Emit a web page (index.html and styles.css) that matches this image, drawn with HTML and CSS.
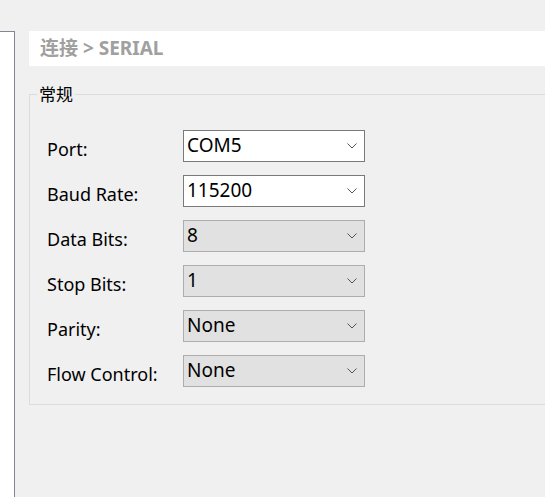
FILE: index.html
```html
<!DOCTYPE html>
<html lang="zh-CN">
<head>
<meta charset="utf-8">
<title>Serial</title>
<link rel="stylesheet" href="styles.css">
</head>
<body>
<div class="app">
  <aside class="sidebar"></aside>
  <main class="main">
    <div class="crumb">连接 &gt; SERIAL</div>
    <section class="group">
      <div class="group-title">常规</div>
      <div class="form">
        <div class="label">Port:</div>
        <div class="combo"><span class="value">COM5</span><svg class="chev" width="10" height="6" viewBox="0 0 10 6"><polyline points="0.5,0.5 5,5 9.5,0.5" fill="none" stroke="#555" stroke-width="1"/></svg></div>
        <div class="label">Baud Rate:</div>
        <div class="combo"><span class="value">115200</span><svg class="chev" width="10" height="6" viewBox="0 0 10 6"><polyline points="0.5,0.5 5,5 9.5,0.5" fill="none" stroke="#555" stroke-width="1"/></svg></div>
        <div class="label">Data Bits:</div>
        <div class="combo disabled"><span class="value">8</span><svg class="chev" width="10" height="6" viewBox="0 0 10 6"><polyline points="0.5,0.5 5,5 9.5,0.5" fill="none" stroke="#555" stroke-width="1"/></svg></div>
        <div class="label">Stop Bits:</div>
        <div class="combo disabled"><span class="value">1</span><svg class="chev" width="10" height="6" viewBox="0 0 10 6"><polyline points="0.5,0.5 5,5 9.5,0.5" fill="none" stroke="#555" stroke-width="1"/></svg></div>
        <div class="label">Parity:</div>
        <div class="combo disabled"><span class="value">None</span><svg class="chev" width="10" height="6" viewBox="0 0 10 6"><polyline points="0.5,0.5 5,5 9.5,0.5" fill="none" stroke="#555" stroke-width="1"/></svg></div>
        <div class="label">Flow Control:</div>
        <div class="combo disabled"><span class="value">None</span><svg class="chev" width="10" height="6" viewBox="0 0 10 6"><polyline points="0.5,0.5 5,5 9.5,0.5" fill="none" stroke="#555" stroke-width="1"/></svg></div>
      </div>
    </section>
  </main>
</div>
</body>
</html>
```

FILE: styles.css
```css
html, body {
  margin: 0;
  padding: 0;
  background: #f0f0f0;
  font-family: "Noto Sans", "Noto Sans CJK SC", sans-serif;
  color: #000;
  overflow: hidden;
}

.app {
  display: flex;
  padding-top: 31px;
  height: 497px;
  box-sizing: border-box;
}

.sidebar {
  width: 14px;
  flex: none;
  background: #fff;
  border-top: 1px solid #828790;
  border-right: 1px solid #828790;
}

.main {
  flex: 1;
  margin-left: 14px;
  min-width: 0;
}

.crumb {
  height: 35px;
  line-height: 35px;
  background: #fff;
  padding-left: 11px;
  font-size: 19px;
  font-weight: bold;
  color: #a0a0a0;
}

.group {
  position: relative;
  margin-top: 28px;
  margin-right: -10px;
  border: 1px solid #dcdcdc;
  padding: 35px 0 17px 17px;
}

.group-title {
  position: absolute;
  top: -11px;
  left: 7px;
  padding: 0 2px;
  background: #f0f0f0;
  font-family: "Noto Sans CJK SC", sans-serif;
  font-size: 17px;
  line-height: 20px;
}

.form {
  display: grid;
  grid-template-columns: 136px 182px;
  row-gap: 13px;
}

.label {
  height: 32px;
  box-sizing: border-box;
  padding-top: 7px;
  line-height: 25px;
  font-size: 18px;
  white-space: nowrap;
}

.combo {
  height: 32px;
  box-sizing: border-box;
  border: 1px solid #7a7a7a;
  background: #fff;
  display: flex;
  justify-content: space-between;
  padding: 0 7px 0 3px;
  font-size: 19px;
  line-height: 28px;
}

.combo.disabled {
  background: #e1e1e1;
  border-color: #adadad;
}

.chev {
  flex: none;
  margin-top: 12px;
}
```
